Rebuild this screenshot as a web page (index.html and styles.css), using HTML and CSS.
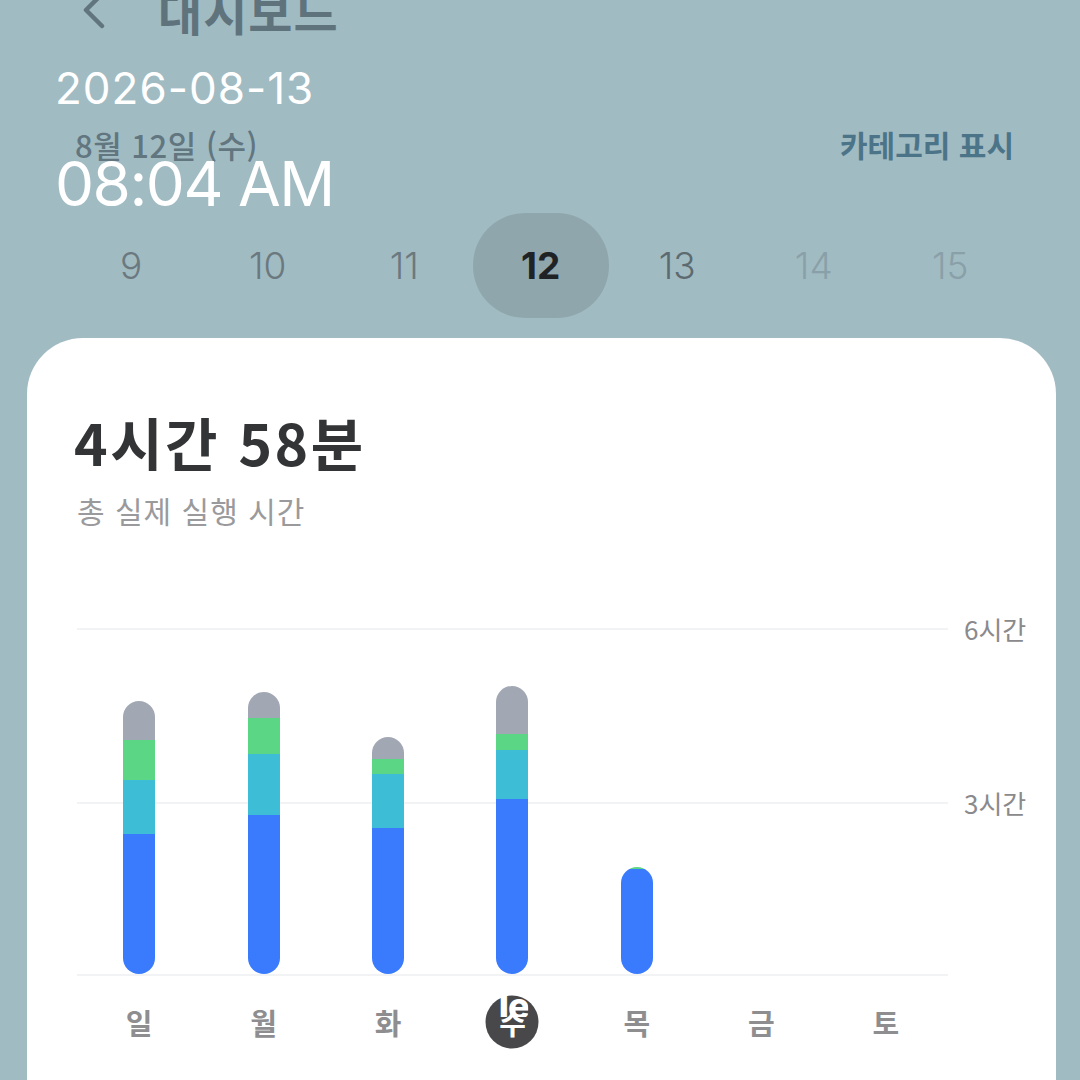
FILE: index.html
```html
<!DOCTYPE html>
<html lang="ko">
<head>
<meta charset="utf-8">
<link rel="stylesheet" href="styles.css">
</head>
<body>
<div class="screen">
  <header class="header">
    <svg class="back" width="32" height="40" viewBox="0 0 32 40"><path d="M24 4 L8 20 L24 36" fill="none" stroke="#61757e" stroke-width="4.5" stroke-linecap="round" stroke-linejoin="round"/></svg>
    <h1 class="title">대시보드</h1>
  </header>

  <div class="subbar">
    <span class="date-label">8월 12일 (수)</span>
    <span class="cat-toggle">카테고리 표시</span>
  </div>

  <div class="days">
    <span class="day">9</span>
    <span class="day">10</span>
    <span class="day">11</span>
    <span class="day active">12</span>
    <span class="day near">13</span>
    <span class="day future">14</span>
    <span class="day future">15</span>
  </div>

  <section class="card">
    <div class="total">4시간 58분</div>
    <div class="total-sub">총 실제 실행 시간</div>

    <div class="chart">
      <div class="plot">
        <div class="col"><div class="bar"><i class="seg gray" style="height:39px"></i><i class="seg green" style="height:40px"></i><i class="seg cyan" style="height:54px"></i><i class="seg blue" style="height:140px"></i></div></div>
        <div class="col"><div class="bar"><i class="seg gray" style="height:26px"></i><i class="seg green" style="height:36px"></i><i class="seg cyan" style="height:61px"></i><i class="seg blue" style="height:159px"></i></div></div>
        <div class="col"><div class="bar"><i class="seg gray" style="height:22px"></i><i class="seg green" style="height:15px"></i><i class="seg cyan" style="height:54px"></i><i class="seg blue" style="height:146px"></i></div></div>
        <div class="col"><div class="bar"><i class="seg gray" style="height:48px"></i><i class="seg green" style="height:16px"></i><i class="seg cyan" style="height:49px"></i><i class="seg blue" style="height:175px"></i></div></div>
        <div class="col"><div class="bar"><i class="seg green" style="height:2px"></i><i class="seg blue" style="height:105px"></i></div></div>
        <div class="col"></div>
        <div class="col"></div>
      </div>
      <div class="axis">
        <span class="tick t6">6시간</span>
        <span class="tick t3">3시간</span>
      </div>
      <div class="weekdays">
        <span class="wd">일</span>
        <span class="wd">월</span>
        <span class="wd">화</span>
        <span class="wd today"><span class="wd-text">수</span><em class="ghost">le</em></span>
        <span class="wd">목</span>
        <span class="wd">금</span>
        <span class="wd">토</span>
      </div>
    </div>
  </section>

  <div class="overlay">
    <div class="ov-date">2026-08-13</div>
    <div class="ov-time">08:04 AM</div>
  </div>
</div>
</body>
</html>
```

FILE: styles.css
```css
* { box-sizing: border-box; margin: 0; padding: 0; }

html, body {
  width: 1080px;
  height: 1080px;
  overflow: hidden;
  background: #a1bbc3;
}

body {
  font-family: "Noto Sans CJK KR", "Noto Sans", sans-serif;
}

.screen {
  position: relative;
  width: 1080px;
  height: 1080px;
  display: flex;
  flex-direction: column;
}

.header {
  display: flex;
  align-items: center;
  height: 60px;
  margin-top: -20px;
  padding-left: 78px;
  gap: 48px;
}

.title {
  font-size: 48px;
  font-weight: 700;
  color: #5f737d;
  letter-spacing: 1px;
  line-height: 60px;
}

.subbar {
  display: flex;
  justify-content: space-between;
  align-items: center;
  margin-top: 88px;
  padding: 0 66px 0 75px;
  height: 32px;
}

.date-label {
  font-size: 31px;
  font-weight: 500;
  color: #62767f;
  letter-spacing: 0.5px;
}

.cat-toggle {
  font-size: 30px;
  font-weight: 700;
  color: #4c7489;
}

.days {
  display: grid;
  grid-template-columns: repeat(7, 136.5px);
  margin: 53px 0 0 63px;
  height: 105px;
  align-items: center;
}

.day {
  display: flex;
  align-items: center;
  justify-content: center;
  height: 105px;
  font-family: "Inter", "Noto Sans", sans-serif;
  font-size: 37px;
  font-weight: 300;
  color: #6b797f;
}

.day.active {
  background: #8fa6ad;
  border-radius: 52px;
  color: #1f2326;
  font-weight: 700;
}

.day.near { color: #5d6a70; }

.day.future {
  color: #8aa0a8;
}

.card {
  margin: 20px 24px 0 27px;
  background: #ffffff;
  border-radius: 56px 56px 0 0;
  padding: 66px 0 0 50px;
  flex: 1;
}

.total {
  font-size: 57px;
  font-weight: 700;
  color: #333436;
  margin-left: -3px;
  line-height: 74px;
  letter-spacing: 2.5px;
}

.total-sub {
  font-size: 30px;
  color: #9a9a9c;
  line-height: 40px;
  margin-top: 12px;
  letter-spacing: 1px;
}

.chart {
  display: grid;
  grid-template-columns: 871px 1fr;
  margin-top: 98px;
}

.plot {
  display: flex;
  align-items: flex-end;
  height: 348px;
  border-top: 2px solid #f2f3f4;
  border-bottom: 2px solid #f2f3f4;
  background: linear-gradient(#f2f3f4, #f2f3f4) 0 172px / 100% 2px no-repeat;
}

.col {
  flex: 1;
  display: flex;
  justify-content: center;
  align-items: flex-end;
}

.bar {
  width: 32px;
  border-radius: 16px;
  overflow: hidden;
  display: flex;
  flex-direction: column;
}

.seg { display: block; }
.seg.gray { background: #a2a8b3; }
.seg.green { background: #5bd685; }
.seg.cyan { background: #3ebdd6; }
.seg.blue { background: #3a7bfd; }

.axis {
  position: relative;
  height: 348px;
}

.tick {
  position: absolute;
  left: 16px;
  transform: translateY(-50%);
  font-size: 26px;
  color: #8a8a8c;
}
.tick.t6 { top: 0; }
.tick.t3 { top: 50%; }

.weekdays {
  display: flex;
  margin-top: 19px;
}

.wd {
  flex: 1;
  display: flex;
  justify-content: center;
  align-items: center;
  height: 54px;
  font-size: 29px;
  font-weight: 700;
  color: #8e8e90;
  position: relative;
}

.wd.today {
  color: #ffffff;
  isolation: isolate;
}
.wd.today::before {
  content: "";
  position: absolute;
  width: 53px;
  height: 53px;
  border-radius: 50%;
  background: #48484b;
  left: 50%;
  top: 50%;
  transform: translate(-50%, -50%);
  z-index: -1;
}

.ghost {
  position: absolute;
  top: 0;
  left: 50%;
  transform: translateX(-46%);
  display: block;
  height: 22px;
  overflow: hidden;
  font-style: normal;
  font-family: "Inter", sans-serif;
  font-size: 36px;
  font-weight: 800;
  color: #ffffff;
  letter-spacing: -1px;
  line-height: 22px;
}

.overlay {
  position: absolute;
  left: 55px;
  top: 58px;
  color: #ffffff;
  font-family: "Inter", "Noto Sans", sans-serif;
}

.ov-date {
  font-size: 44px;
  line-height: 60px;
  letter-spacing: 1px;
}

.ov-time {
  font-size: 62px;
  line-height: 80px;
  margin-top: 26px;
  letter-spacing: -1.5px;
}
```
